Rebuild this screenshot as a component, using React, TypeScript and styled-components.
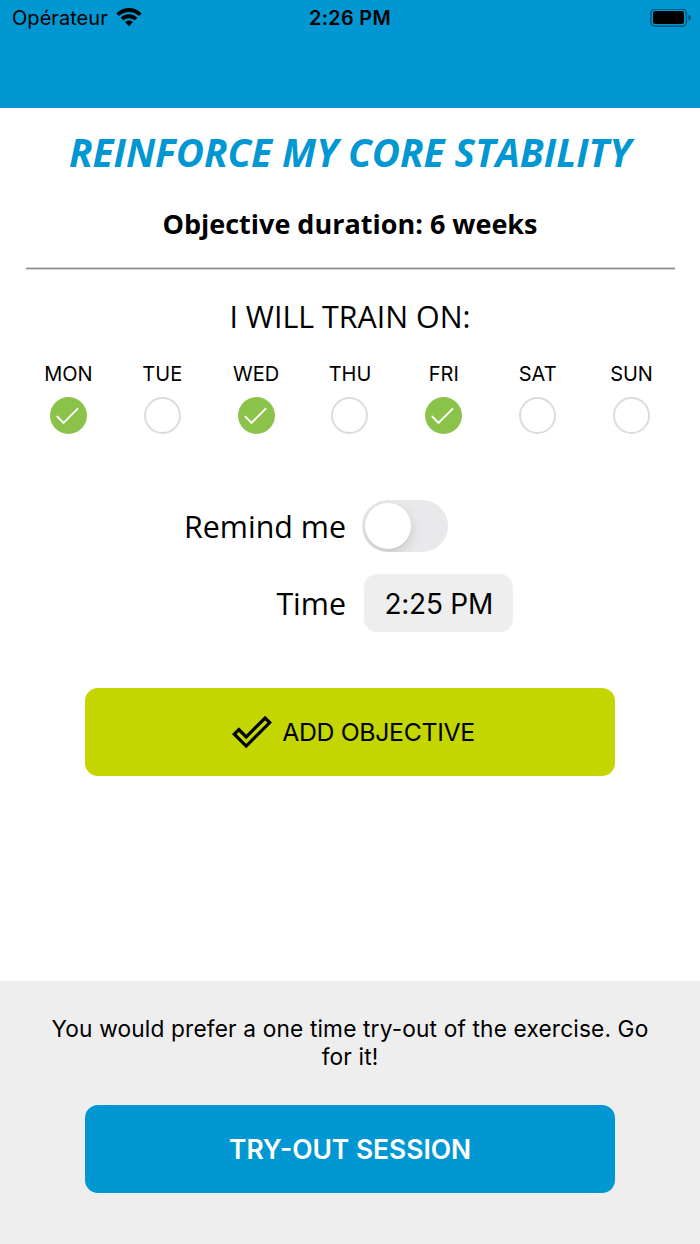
import React, { useState } from "react";
import styled, { createGlobalStyle } from "styled-components";

const GlobalStyle = createGlobalStyle`
  *, *::before, *::after { box-sizing: border-box; }
  body { margin: 0; background: #fff; }
  button { border: 0; padding: 0; margin: 0; background: none; font: inherit; color: inherit; }
`;

const system = `Inter, "Liberation Sans", sans-serif`;
const brand = `"Open Sans", "Noto Sans", sans-serif`;

const Screen = styled.div`
  display: flex;
  flex-direction: column;
  width: 700px;
  height: 1244px;
  background: #fff;
  color: #000;
  font-family: ${brand};
`;

const Header = styled.header`
  height: 108px;
  background: #0097d3;
`;

const StatusBar = styled.div`
  display: grid;
  grid-template-columns: 1fr auto 1fr;
  align-items: center;
  height: 36px;
  padding: 0 9px;
  font-family: ${system};
  font-size: 20px;
  line-height: 24px;
`;

const Carrier = styled.div`
  display: flex;
  align-items: center;
  gap: 8px;
  padding-left: 3px;
  letter-spacing: 0.05px;
`;

const Clock = styled.div`
  font-weight: 600;
  font-size: 19.8px;
  letter-spacing: 0.35px;
`;

const Battery = styled.svg`
  justify-self: end;
`;

const Main = styled.main`
  flex: 1;
  display: flex;
  flex-direction: column;
  align-items: center;
`;

const Title = styled.h1`
  margin: 17px 0 0;
  color: #0097d3;
  font-size: 38.7px;
  font-weight: 700;
  font-style: italic;
  line-height: 54px;
  white-space: nowrap;
`;

const Duration = styled.h2`
  margin: 26px 0 0;
  font-size: 27px;
  font-weight: 700;
  line-height: 38px;
  white-space: nowrap;
`;

const Divider = styled.hr`
  width: 649px;
  height: 3px;
  margin: 24px 0 0;
  border: solid #d4d4d4;
  border-width: 1px 0;
  background: #8e8e8e;
`;

const Prompt = styled.p`
  margin: 26px 0 0;
  font-size: 30.4px;
  line-height: 42px;
  white-space: nowrap;
`;

const Week = styled.div`
  display: grid;
  grid-template-columns: repeat(7, 1fr);
  width: 657px;
  margin-top: 21px;
`;

const Day = styled.div`
  display: flex;
  flex-direction: column;
  align-items: center;
  gap: 8px;
`;

const DayName = styled.span`
  font-family: ${system};
  font-size: 20px;
  line-height: 30px;
`;

const DayCheck = styled.button<{ $on: boolean }>`
  display: flex;
  align-items: center;
  justify-content: center;
  width: 37px;
  height: 37px;
  border-radius: 50%;
  border: ${(p) => (p.$on ? "0" : "2px solid #dcdcdc")};
  background: ${(p) => (p.$on ? "#8bc34a" : "#fff")};
`;

const Settings = styled.div`
  display: grid;
  grid-template-columns: 346px 1fr;
  grid-template-rows: 52px 58px;
  row-gap: 22px;
  column-gap: 17px;
  align-items: center;
  width: 700px;
  margin-top: 66px;
`;

const SettingLabel = styled.span`
  justify-self: end;
  padding-top: 2px;
  font-size: 30.4px;
  line-height: 42px;
  white-space: nowrap;
`;

const Toggle = styled.button<{ $on: boolean }>`
  display: flex;
  align-items: center;
  justify-content: ${(p) => (p.$on ? "flex-end" : "flex-start")};
  width: 86px;
  height: 52px;
  margin-left: -1px;
  padding: 0 3px;
  border-radius: 26px;
  background: ${(p) => (p.$on ? "#8bc34a" : "#e9e9eb")};
  overflow: hidden;
`;

const Knob = styled.span`
  width: 46px;
  height: 46px;
  border-radius: 50%;
  background: #fff;
  box-shadow: 0 5px 13px rgba(0, 0, 0, 0.13), 0 2px 2px rgba(0, 0, 0, 0.04);
`;

const TimeField = styled.button`
  justify-self: start;
  width: 149.5px;
  height: 58px;
  margin-left: 0.5px;
  padding: 2px 0 0 1px;
  border-radius: 13px;
  background: #eeeeef;
  font-family: ${system};
  font-size: 28px;
  line-height: 56px;
  letter-spacing: -0.25px;
  text-align: center;
  white-space: nowrap;
`;

const ActionButton = styled.button<{ $primary?: boolean }>`
  display: flex;
  align-items: center;
  justify-content: center;
  gap: 10px;
  width: 530px;
  height: 88px;
  padding-left: ${(p) => (p.$primary ? "7px" : "0")};
  border-radius: 13px;
  background: ${(p) => (p.$primary ? "#c4d600" : "#0097d3")};
  color: ${(p) => (p.$primary ? "#000" : "#fff")};
  font-family: ${system};
  font-size: ${(p) => (p.$primary ? "24.8px" : "26.4px")};
  font-weight: ${(p) => (p.$primary ? 400 : 600)};
  letter-spacing: ${(p) => (p.$primary ? "-0.33px" : "0")};
  white-space: nowrap;
`;

const AddSlot = styled.div`
  margin-top: 56px;
`;

const Footer = styled.footer`
  display: flex;
  flex-direction: column;
  align-items: center;
  height: 263px;
  padding-top: 34px;
  background: #eee;
`;

const Hint = styled.p`
  width: 610px;
  margin: 0 0 34px;
  font-family: ${system};
  font-size: 22.7px;
  line-height: 28px;
  letter-spacing: 0.15px;
  text-align: center;
`;

function WifiIcon() {
  return (
    <svg width="26" height="20" viewBox="0 0 26 20" aria-hidden="true">
      <path d="M0.4 5.4C7.5 -1.7 18.5 -1.7 25.6 5.4L23 8C17.500 2.500 8.500 2.500 3 8Z" fill="#000" />
      <path d="M4.700 9.800C9.300 5.200 16.700 5.200 21.300 9.800L18.700 12.400C15.500 9.400 10.500 9.400 7.300 12.400Z" fill="#000" />
      <path d="M9 14.100C11.300 12 14.700 12 17 14.100L13 18.200Z" fill="#000" />
    </svg>
  );
}

function BatteryIcon() {
  return (
    <Battery width="41" height="19" viewBox="0 0 41 19" aria-hidden="true">
      <rect x="0.8" y="-0.1" width="35.6" height="17.4" rx="4.6" fill="none" stroke="#000" strokeOpacity="0.42" strokeWidth="1.5" />
      <rect x="3" y="2.1" width="31" height="13" rx="2.4" fill="#000" />
      <path d="M38.5 5.600c1.400.5 2.200 1.600 2.200 3s-.8 2.500-2.200 3z" fill="#000" fillOpacity="0.5" />
    </Battery>
  );
}

function DayTick() {
  return (
    <svg width="37" height="37" viewBox="0 0 37 37" aria-hidden="true">
      <path d="M7.4 19.6l6.1 6.3 14-14.1" fill="none" stroke="#fff" strokeWidth="1.9" strokeLinecap="round" />
    </svg>
  );
}

function OutlineTick() {
  return (
    <svg width="40" height="34" viewBox="0 0 40 34" aria-hidden="true">
      <path
        d="M2.3 19.2L6.9 14.6L14.2 21.9L33.1 3L37.7 7.6L14.2 31.1Z"
        fill="none"
        stroke="#000"
        strokeWidth="3.2"
      />
    </svg>
  );
}

const dayNames = ["MON", "TUE", "WED", "THU", "FRI", "SAT", "SUN"];

export default function App() {
  const [selected, setSelected] = useState<string[]>(["MON", "WED", "FRI"]);
  const [remind, setRemind] = useState(false);

  const toggleDay = (name: string) =>
    setSelected((days) => (days.includes(name) ? days.filter((d) => d !== name) : [...days, name]));

  return (
    <Screen>
      <GlobalStyle />
      <Header>
        <StatusBar>
          <Carrier>
            Opérateur
            <WifiIcon />
          </Carrier>
          <Clock>2:26 PM</Clock>
          <BatteryIcon />
        </StatusBar>
      </Header>
      <Main>
        <Title>REINFORCE MY CORE STABILITY</Title>
        <Duration>Objective duration: 6 weeks</Duration>
        <Divider />
        <Prompt>I WILL TRAIN ON:</Prompt>
        <Week>
          {dayNames.map((name) => {
            const on = selected.includes(name);
            return (
              <Day key={name}>
                <DayName>{name}</DayName>
                <DayCheck $on={on} aria-label={name} aria-pressed={on} onClick={() => toggleDay(name)}>
                  {on && <DayTick />}
                </DayCheck>
              </Day>
            );
          })}
        </Week>
        <Settings>
          <SettingLabel>Remind me</SettingLabel>
          <Toggle $on={remind} role="switch" aria-checked={remind} aria-label="Remind me" onClick={() => setRemind(!remind)}>
            <Knob />
          </Toggle>
          <SettingLabel>Time</SettingLabel>
          <TimeField>2:25 PM</TimeField>
        </Settings>
        <AddSlot>
          <ActionButton $primary>
            <OutlineTick />
            ADD OBJECTIVE
          </ActionButton>
        </AddSlot>
      </Main>
      <Footer>
        <Hint>You would prefer a one time try-out of the exercise. Go for it!</Hint>
        <ActionButton>TRY-OUT SESSION</ActionButton>
      </Footer>
    </Screen>
  );
}
